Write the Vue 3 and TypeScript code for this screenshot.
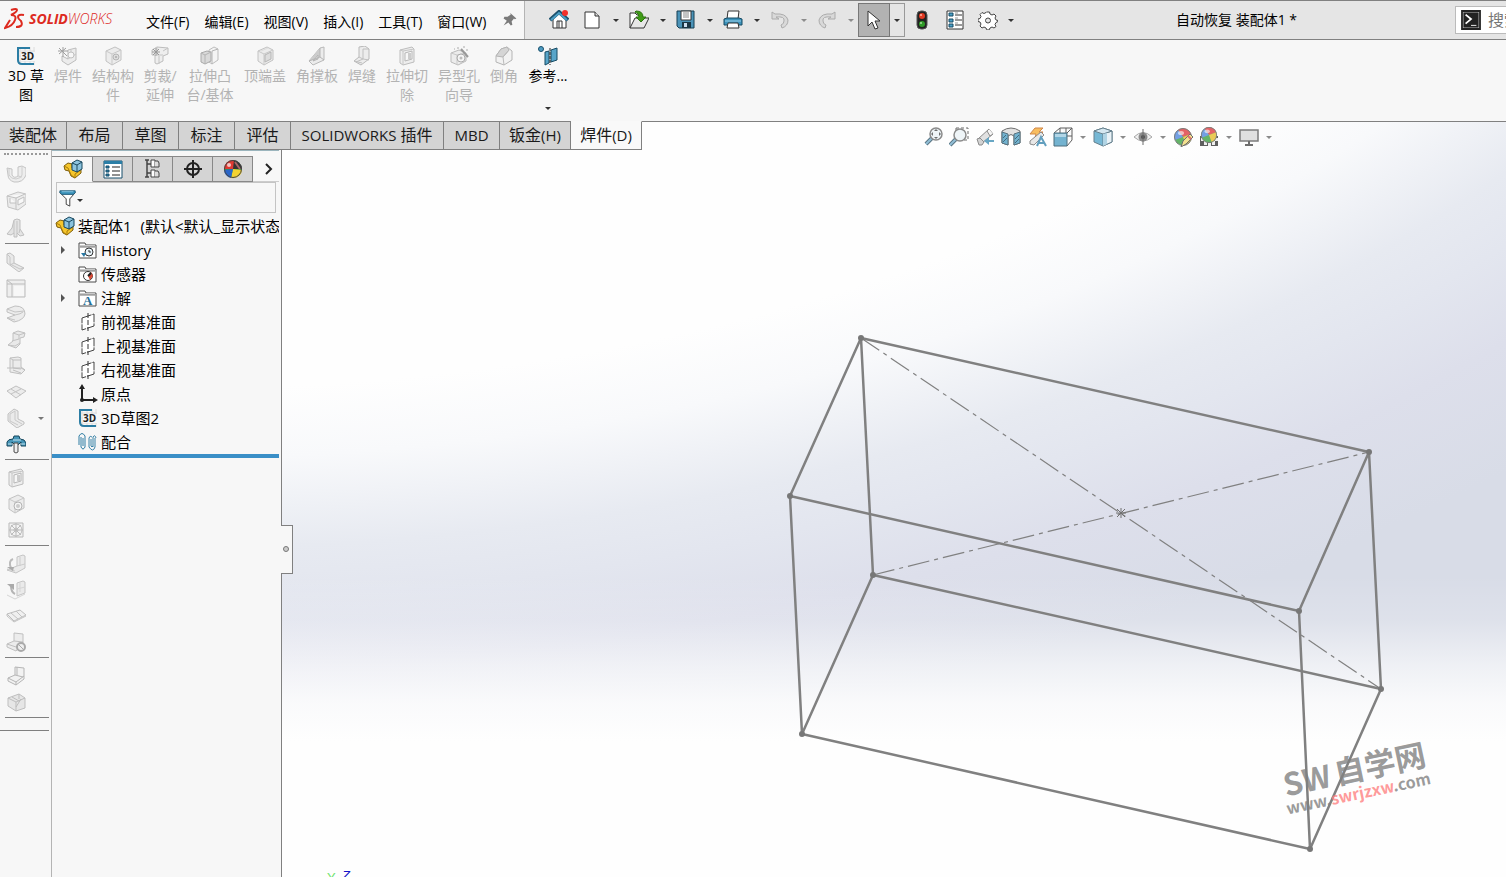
<script setup lang="ts">
interface RibbonItem { icon: string; lines: string[]; width: string; on?: boolean; caret?: boolean }
interface Tab { zh?: string; latin?: string; width: string; on?: boolean; lead?: boolean }
interface TreeNode { icon: string; label: string; arrow?: boolean }
interface QuickItem { icon: string; label: string; caret?: boolean; off?: boolean }

const cube = '<path d="M3 5l9-4 6 3v10l-9 5-6-4z" fill="#ececec" stroke="#c2c2c2"/><path d="M3 5l6 3 9-4M9 8v11" fill="none" stroke="#c9c9c9"/>'
const sketch3d = '<path d="M4 1v18M9 1v18M14 1v18M18 1v18M1 5h18M1 10h18M1 15h18" stroke="#dcdcdc" fill="none"/><path d="M14 2H2v12q0 4 4 4h12" fill="none" stroke="#2b7da4" stroke-width="2"/><rect x="5" y="6" width="14" height="9" fill="#f7f7f7"/><text x="5" y="14" font-family="Open Sans, sans-serif" font-weight="700" font-size="10" fill="#222">3D</text>'
const assembly = '<path d="M1 7l4-3 4 1v4l5 3 4-2v4l-6 5-4-2-2-5-4-1z" fill="#f6c62c" stroke="#7b5c0c"/><path d="M1 7l4 2 3 7 4 3M12 19v-4l6-4" fill="none" stroke="#a97d0b"/><path d="M9 4l5-3 5 2v7l-5 3-5-2z" fill="#8cc3de" stroke="#19485f"/><path d="M9 4l5 2 5-3M14 6v7" fill="none" stroke="#19485f"/>'
const folder = '<path d="M1 18V3h6l1 2h10v13z" fill="#fff" stroke="#4a4a4a"/><path d="M2 5h15v2H2z" fill="#c9c9c9"/><path d="M2 7h15" stroke="#777"/>'
const plane = '<path d="M4 6l12-4v12l-12 4z" fill="#fff" stroke="#444" stroke-dasharray="10 1"/><path d="M10 1v18" stroke="#333" stroke-dasharray="5 2"/>'
const lens = (x: number, y: number) => `<path d="M${x - 4} ${y + 4}l-6 6" stroke="#3f5f70" stroke-width="4"/><path d="M${x - 4} ${y + 4}l-6 6" stroke="#7fb4d0" stroke-width="2"/><circle cx="${x}" cy="${y}" r="6" fill="#edf4f8" stroke="#777" stroke-width="1.500"/>`
const ball = '<circle cx="10" cy="10" r="8.500" fill="#4aa84e"/><path d="M10 10L5 3a8.500 8.500 0 0 1 13 4z" fill="#e0474c"/><path d="M10 10L2 13a8.500 8.500 0 0 1 3-10z" fill="#5b8fe0"/><path d="M10 10l8-3a8.500 8.500 0 0 1-5 11z" fill="#e7c23a"/><circle cx="10" cy="10" r="8.500" fill="none" stroke="#666"/><ellipse cx="8" cy="6" rx="3" ry="2" fill="#fff" opacity=".6"/>'

const icons: Record<string, string> = {
  sketch3d, assembly, plane,
  weldment: '<path d="M4 10l6 3V4l8-2v12l-8 5-6-4z" fill="#ececec" stroke="#bdbdbd"/><path d="M10 13l8-5M13 4v8" fill="none" stroke="#c8c8c8"/><circle cx="13" cy="9" r="3" fill="#f7f7f7" stroke="#c0c0c0"/><path d="M1 2l8 8M1 8l7-6M5 1v10M0 5h10" stroke="#9f9f9f"/>',
  member: cube + '<circle cx="13" cy="11" r="3" fill="#ddd" stroke="#b5b5b5"/><circle cx="13" cy="11" r="1" fill="#aaa"/>',
  trim: '<path d="M2 4l5-3 11 1v6l-5 2v5l-6 3-2-1V9H2z" fill="#eee" stroke="#bdbdbd"/><path d="M7 9h6M7 1v8M13 5l5-3M9 10v8" fill="none" stroke="#c4c4c4"/><path d="M3 3l6 6M9 3L3 9M6 2v8M2 6h8" stroke="#999"/>',
  extrude: '<path d="M9 4l5-3 4 2v11l-6 4-3-2z" fill="#f4f4f4" stroke="#bdbdbd"/><path d="M1 7l6-2 4 1v9l-6 3-4-2z" fill="#d9d9d9" stroke="#a9a9a9"/><path d="M1 7l4 2 6-3M5 9v9M12 5v13M12 5l6-2" fill="none" stroke="#b4b4b4"/>',
  endcap: cube + '<path d="M10 9l6-3v7l-6 3z" fill="#ddd" stroke="#b5b5b5"/><path d="M6 5l7-3" stroke="#ddd"/>',
  gusset: '<path d="M2 15L13 2l4-1v13l-11 5z" fill="#ececec" stroke="#b9b9b9"/><path d="M2 15l11-4V2M13 11l4 3M6 15l5-6v4z" fill="#ccc" stroke="#b5b5b5"/>',
  bead: '<path d="M7 1l6-1 4 3v10l-8 6-7-4 5-4z" fill="#ececec" stroke="#b9b9b9"/><path d="M11 3v10l-7 3M11 13l6 1M2 15l8 2M11 3l6 0M7 11l4 2" fill="none" stroke="#c0c0c0"/>',
  cut: '<path d="M3 4l12-3 2 2v13l-11 3-3-2z" fill="#eee" stroke="#bdbdbd"/><path d="M3 4l3 1 11-2M6 5v14" fill="none" stroke="#c6c6c6"/><path d="M8 7l7-2v8l-7 2z" fill="#f7f7f7" stroke="#b7b7b7"/><path d="M11 7h3v6h-3z" fill="#ccc"/>',
  hole: cube + '<circle cx="12" cy="12" r="4" fill="#f5f5f5" stroke="#b3b3b3"/><circle cx="12" cy="12" r="2" fill="#ccc"/>',
  wizard: '<path d="M2 7l8-3 7 3v8l-8 4-7-3z" fill="#ececec" stroke="#bbb"/><path d="M2 7l6 2 9-2M8 9v10" fill="none" stroke="#c9c9c9"/><circle cx="12" cy="12" r="4" fill="#f5f5f5" stroke="#aaa"/><circle cx="12" cy="12" r="1.500" fill="#bbb"/><path d="M12 3l7 8" stroke="#999" stroke-width="2"/><path d="M8 2h2M14 1h2M17 4h2M5 3h1" stroke="#aaa"/>',
  chamfer: '<path d="M2 10l5-7 6-2 5 4v9l-8 5-8-3z" fill="#f2f2f2" stroke="#b5b5b5"/><path d="M2 10l7 1 6-7-2-3-6 2z" fill="#d5d5d5" stroke="#b5b5b5"/><path d="M9 11l1 8M9 11l6-7" stroke="#bbb"/>',
  reference: '<circle cx="3" cy="3" r="2.500" fill="#4f9cc2" stroke="#19506c"/><path d="M7 6l4-1v12l-4 2zM13 4l6-2v12l-6 2z" fill="#58a5c9" stroke="#174a63"/><path d="M12 2v17" stroke="#222" stroke-dasharray="3 1"/>',
  tube: '<path d="M1 4l5 1v6q2 4 6 1V3l4-1 4 2v7q-3 8-12 7-6-2-6-7z" fill="#ededed" stroke="#c4c4c4"/><path d="M3 5v6q2 4 7 4 6-1 6-4V3M12 12l4 1" fill="none" stroke="#cecece"/>',
  frame: '<path d="M1 5l11-4 8 2v10l-8 6-10-3z" fill="#ececec" stroke="#c3c3c3"/><path d="M1 5l9 2 9-4M10 7v11M4 7v5h6M12 9l6-3v5l-6 3z" fill="#f8f8f8" stroke="#c0c0c0"/>',
  loft: '<path d="M8 2l3-1 3 1v9l4 6-4 1-3-3v4H8v-4l-3 2-4-1 5-6z" fill="#e4e4e4" stroke="#bfbfbf"/><path d="M8 3v12M11 3v12M14 11l-1 4" stroke="#c3c3c3" fill="none"/>',
  angle: '<path d="M1 2l3-1 4 3v7l10 5-5 4L1 11z" fill="#e9e9e9" stroke="#c0c0c0"/><path d="M4 5v7l10 5 4-1M1 2l3 3M8 11l-4 2" fill="none" stroke="#c6c6c6"/>',
  corner: '<path d="M1 2h18v17H1z" fill="#eee" stroke="#bcbcbc"/><path d="M1 6h18M6 6v13M1 2l5 4" fill="none" stroke="#bcbcbc"/><path d="M8 8h10v10H8z" fill="#f7f7f7"/>',
  bend: '<path d="M1 5l8-3q10 0 10 8-1 6-11 8l-7-4 8-3-8-3z" fill="#ececec" stroke="#c0c0c0"/><path d="M1 5l8 3 9-1M9 11q6-1 8-3M1 14l8 2" fill="none" stroke="#c4c4c4"/>',
  jog: '<path d="M7 3l5-2 7 2-1 4-4 1v6l-4 4-8-3 5-4z" fill="#e9e9e9" stroke="#c0c0c0"/><path d="M7 3l6 2 6-2M13 5v4l-7 2M2 15l7 1 5-3" fill="none" stroke="#c3c3c3"/>',
  flange: '<path d="M4 2l8-1 3 1v9l4 3-4 4-11-2V9z" fill="#ececec" stroke="#c0c0c0"/><path d="M4 2l3 2h8M7 4v8l8 1M1 12h14l4 2M7 14l8 3" fill="none" stroke="#bfbfbf"/>',
  cross: '<path d="M1 9l9-5 10 5-10 7z" fill="#ececec" stroke="#c0c0c0"/><path d="M5 7l10 6M15 7l-10 5" fill="none" stroke="#c3c3c3"/>',
  weldcorner: '<path d="M2 6l6-5 4 2v8l6 3v2l-7 4-9-7z" fill="#ebebeb" stroke="#c0c0c0"/><path d="M4 6l5-3v9l7 4M4 6v7l8 4" fill="none" stroke="#c9c9c9"/>',
  canopy: '<path d="M1 12V8q1-3 6-3l1-3h5l1 3q5 0 6 4v3h-5V8l-3 3H9L6 8v4z" fill="#4796b8" stroke="#17475d"/><path d="M2 10h4M15 10h4M7 6h8" stroke="#bfe0ee"/><path d="M8 9h4v9q-2 2-4 0z" fill="#ddd" stroke="#555"/><path d="M10 10v8" stroke="#fff"/>',
  vent: '<path d="M3 3h14v14H3z" fill="#f2f2f2" stroke="#b9b9b9"/><circle cx="10" cy="10" r="6" fill="none" stroke="#bbb"/><path d="M10 3v14M3 10h14M5 5l10 10M15 5L5 15" stroke="#bbb"/><circle cx="10" cy="10" r="2" fill="none" stroke="#bbb"/>',
  unfold: '<path d="M11 3l6-2 2 1v12l-9 5-9-3 10-4z" fill="#eaeaea" stroke="#c5c5c5"/><path d="M11 12l8-2M14 3v9M1 15l8 2" stroke="#ccc" fill="none"/><path d="M7 5q-5 2-2 9" fill="none" stroke="#bbb" stroke-width="2"/><path d="M1 13h7l-1 4z" fill="#aaa"/>',
  fold: '<path d="M11 3l6-2 2 1v11l-8 3V4z" fill="#eaeaea" stroke="#c5c5c5"/><path d="M1 15l8 4 10-5M14 3v9M11 9l8-2" stroke="#d5d5d5" fill="none"/><path d="M5 6q0 6 4 8" fill="none" stroke="#b5b5b5" stroke-width="2"/><path d="M1 4h7v6z" fill="#aaa"/>',
  flat: '<path d="M1 8l13-4 6 5-12 6z" fill="#f0f0f0" stroke="#bdbdbd"/><path d="M5 7l7 6M10 5l6 6M1 8v2l7 6 12-6" fill="none" stroke="#c2c2c2"/>',
  nobend: '<path d="M8 1l9 1v9l-7 8-9-4v-3l7-3z" fill="#ececec" stroke="#c0c0c0"/><path d="M1 12l9 3 7-5M8 9l9 1" fill="none" stroke="#c0c0c0"/><circle cx="15" cy="15" r="4" fill="#eee" stroke="#aaa" stroke-width="2"/><path d="M12 12l6 6" stroke="#aaa"/>',
  rip: '<path d="M9 1l9 1v11l-8 6-8-4v-3l7-3z" fill="#f2f2f2" stroke="#b5b5b5"/><path d="M9 9l8 2M2 12l8 4 8-6M11 1v8M10 16v3" fill="none" stroke="#b5b5b5"/>',
  solidify: '<path d="M2 6l11-4 6 4v10l-9 3-8-5z" fill="#e6e6e6" stroke="#bfbfbf"/><path d="M2 6l8 4 9-4M10 10v9M6 5l7 4M13 2v5M10 15l5-8" fill="none" stroke="#bdbdbd"/>',
  history: folder + '<circle cx="11" cy="12" r="4" fill="#e8f4fa" stroke="#333"/><path d="M11 10v2h2" fill="none" stroke="#333"/><path d="M3 13h5l-2 4z" fill="#2879a5"/>',
  sensor: folder + '<circle cx="10" cy="12" r="4.500" fill="#fff" stroke="#333"/><path d="M10 12l3-4 2 4-3 4z" fill="#da4a36"/><path d="M10 12l3-3" stroke="#222" stroke-width="2"/>',
  note: folder + '<text x="5" y="17" font-family="Liberation Serif, serif" font-weight="700" font-size="13" fill="#266f98">A</text>',
  origin: '<path d="M4 16V4M4 16h12" fill="none" stroke="#222" stroke-width="2"/><path d="M4 0l3 5H1zM20 16l-5-3v6z" fill="#222"/><circle cx="4" cy="16" r="2" fill="#222"/>',
  mate: '<path d="M3 5v10q2 4 4 0V4q-3-5-6 0v9M5 6v8" fill="none" stroke="#2f7da3"/><path d="M11 6v9M17 6v9q-2 6-6 0M15 5v10M13 7v7q1 2 2 0M11 6q1-3 3-1M15 5q2-3 3 1" fill="none" stroke="#3b84a8"/>',
  list: '<path d="M1 2h18v17H1z" fill="#fff" stroke="#174f6c"/><path d="M1 2h18v3H1z" fill="#2c7fa7"/><path d="M3 7h3v2H3zM3 11h3v2H3zM3 15h3v2H3z" fill="#2c7fa7" stroke="#174f6c"/><path d="M9 8h8M9 12h8M9 16h8" stroke="#222"/>',
  config: '<path d="M4 1v17M4 5h4M4 14h4M2 1h4M2 18h4" fill="none" stroke="#444" stroke-width="1.500"/><path d="M8 1h4v7H8zM8 11h4v7H8z" fill="#fff" stroke="#444"/><path d="M12 2q4-1 4 2v4h-4M12 12q4-1 4 2v4h-4" fill="#ddd" stroke="#444"/>',
  target: '<circle cx="10" cy="10" r="6" fill="none" stroke="#222" stroke-width="2"/><path d="M10 1v18M1 10h18" stroke="#222" stroke-width="2"/>',
  colors: '<circle cx="10" cy="10" r="8.500" fill="#2fa342"/><path d="M10 10V1a9 9 0 0 1 9 9z" fill="#333"/><path d="M10 10H1a9 9 0 0 1 10-9z" fill="#e03a32"/><path d="M10 10l9 1a9 9 0 0 1-11 8z" fill="#f3d22f"/><path d="M10 10l-2 9a9 9 0 0 1-7-8z" fill="#2a65c8"/><circle cx="10" cy="10" r="8.500" fill="none" stroke="#444"/><path d="M12 3l5 7" stroke="#a66" stroke-width="2"/><ellipse cx="6" cy="6" rx="2" ry="2" fill="#fff" opacity=".7"/>',
  filter: '<path d="M1 4l7 7v6l4 2v-8l6-7z" fill="#fff" stroke="#333"/><path d="M1 2h17v2l-2 2H3L1 4z" fill="#3a93bb" stroke="#1f5a78"/><path d="M3 3h13" stroke="#8cc6e0"/>',
  home: '<path d="M4 9v9h13V9l-7-6z" fill="#fff" stroke="#333"/><path d="M8 18v-7h5v7M10 11v7" fill="none" stroke="#333"/><path d="M1 10l9-8 9 8" fill="none" stroke="#1d526e" stroke-width="4"/><path d="M2 10l8-7 8 7" fill="none" stroke="#4c9fc5" stroke-width="2"/><circle cx="16" cy="3" r="3" fill="#f2302b"/>',
  newdoc: '<path d="M3 2h10l4 4v12H3z" fill="#fff" stroke="#333"/><path d="M13 2v4h4" fill="#ddd" stroke="#333"/>',
  open: '<path d="M1 18V3h5l2 2h5v3" fill="#fff" stroke="#333"/><path d="M1 18L6 8h14l-5 10z" fill="#e7e7e7" stroke="#333"/><path d="M7 1q7 0 7 6h3l-5 5-5-5h3q0-4-4-5z" fill="#3f9b16" stroke="#2c7410"/>',
  save: '<path d="M1 1h17v17H3l-2-2z" fill="#4a93b8" stroke="#173e52"/><path d="M5 1h10v9H5z" fill="#fff" stroke="#333"/><path d="M7 3h6M7 5h6M7 7h6" stroke="#888"/><path d="M6 12h9v6H6z" fill="#1b3645"/><path d="M8 13h3v4H8z" fill="#cde"/>',
  print: '<path d="M5 1h11l-1 8H4z" fill="#fff" stroke="#333"/><path d="M1 9l3-1h12l3 1v6H1z" fill="#3d93bb" stroke="#174a63"/><path d="M2 11h16" stroke="#9bd0e8"/><path d="M5 13h10l1 5H4z" fill="#fff" stroke="#333"/>',
  undo: '<path d="M2 2v7h7L6 7q9-1 8 4 0 3-3 4l1 3q6-2 6-8Q16 3 5 4z" fill="#d9d9d9" stroke="#ababab"/>',
  redo: '<path d="M18 2v7h-7l3-2q-9-1-8 4 0 3 3 4l-1 3q-6-2-6-8Q4 3 15 4z" fill="#d9d9d9" stroke="#ababab"/>',
  pointer: '<path d="M4 1v15l4-4 3 7 3-1-3-7h5z" fill="#fff" stroke="#333"/>',
  traffic: '<rect x="5" y="1" width="10" height="18" rx="4" fill="#222" stroke="#555"/><circle cx="10" cy="6" r="3" fill="#e23a23"/><circle cx="10" cy="14" r="3" fill="#2f9a27"/><circle cx="9" cy="5" r="1" fill="#ffb9a8"/><circle cx="9" cy="13" r="1" fill="#a9e0a0"/>',
  options: '<path d="M2 1h16v18H2z" fill="#fff" stroke="#333"/><path d="M4 3h4v3H4zM4 9h4v3H4zM4 14h4v3H4z" fill="#4ba0c8" stroke="#174a63"/><path d="M10 5h7M10 10h7M10 15h7" stroke="#333"/><path d="M10 3h3M10 8h3M10 13h3" stroke="#999"/>',
  gear: '<path d="M8.500 2h3l.5 2 2 1 2-1 2 2-1 2 1 2 2 .5v1l-2 1-1 2 1 2-2 1.500-2-1-2 1-1 2h-2l-1-2-2-1-2 1-2-2 1-2-1-2-2-.5v-2.500l2-.5 1-2-1-2 2-2 2 1 2-1z" fill="#fff" stroke="#444"/><circle cx="10" cy="10.500" r="2.500" fill="#e7e7e7" stroke="#444"/>',
  pin: '<path d="M11 2l7 6-2 1-1-1-3 4 1 4-2 1-3-4-6 4 4-6-4-3 1-2h4l4-3-1-1z" fill="#7b7b7b"/>',
  prompt: '<path d="M1 1h18v18H1z" fill="#222" stroke="#eee"/><path d="M0 0h20v20H0z" fill="none" stroke="#222" stroke-width="2"/><path d="M4 4l6 5-6 5" fill="none" stroke="#fff" stroke-width="2"/><path d="M10 16h6" stroke="#fff"/>',
  zoomfit: lens(13, 7) + '<path d="M13 2l2 2h-4zM13 12l2-2h-4zM8 7l2-2v4zM18 7l-2-2v4z" fill="#555"/>',
  zoomarea: '<path d="M7 1h12v12H7z" fill="none" stroke="#555" stroke-dasharray="3 2"/>' + lens(11, 8),
  prev: '<path d="M3 12L14 2l4 5-11 9z" fill="#ddd" stroke="#777"/><path d="M2 12l3-1 4 4-2 3H4z" fill="#ccc" stroke="#777"/><path d="M14 2l-2 2 3 5 3-2" fill="#f4f4f4" stroke="#777"/><path d="M19 15h-5v3l-5-4 5-4v3h5z" fill="#4f98bb"/>',
  section: '<path d="M1 4q9-6 18 0v12l-6 2V9q-3-3-6 0v9l-6-2z" fill="#ddd" stroke="#555"/><path d="M1 5l6 2v11l-6-2zM13 7l6-2v11l-6 2z" fill="#5aa6c9" stroke="#3b5a69"/><path d="M2 11l3-3M2 15l4-4M14 12l4-4M14 16l4-4" stroke="#24536a"/>',
  dynamic: '<path d="M8 1h8l-4 4h4l-8 6 1-4H3z" fill="#f7b244" stroke="#c8722a"/><path d="M3 14L14 5l3 3L7 18l-4-1z" fill="#e5e5e5" stroke="#777"/><path d="M10 19l4-9 5 9M12 16h5" fill="none" stroke="#478fb4" stroke-width="2"/>',
  orient: '<path d="M7 1h12v12M7 1v5M1 6l6-5M14 6l5-5M14 19l5-6M13 1v8h6" fill="#f7f7f7" stroke="#444"/><path d="M1 6h13v13H1z" fill="#5da7c9" stroke="#2f5567"/><path d="M2 7h11v3H2z" fill="#a5d0e3"/>',
  display: '<path d="M1 4l9-3 9 3v11l-9 4-9-4z" fill="#5faccf" stroke="#4c6b7a"/><path d="M10 7l9-3v11l-9 4z" fill="#e6f1f6" stroke="#4c6b7a"/><path d="M1 4l9 3 9-3-9-3z" fill="#cfe4ee" stroke="#4c6b7a"/><path d="M10 7l4-1v11l-4 2z" fill="#a4cde0"/>',
  eye: '<path d="M1 10q9-9 18 0-9 8-18 0z" fill="#eee" stroke="#999"/><circle cx="10" cy="10" r="4.500" fill="#777"/><circle cx="10" cy="10" r="2" fill="#333"/><path d="M10 2v16" stroke="#555"/>',
  appearance: ball + '<path d="M10 14l7-7 3 3-7 7-5 3z" fill="#f3dd7c" stroke="#555"/><path d="M15 9l3 3" stroke="#d55" stroke-width="2"/>',
  scene: '<path d="M1 9h18v10H1z" fill="#444"/><path d="M2 11h3v3H2zM5 14h3v4H5zM9 16h3v3H9zM13 14h3v4h-3zM16 11h3v3h-3z" fill="#eee"/><g transform="translate(1 -1) scale(.9)">' + ball + '</g>',
  monitor: '<path d="M1 3h18v11H1z" fill="#dcdcdc" stroke="#666" stroke-width="1.500"/><path d="M10 14v4M6 18h8" stroke="#555" stroke-width="2"/>',
}

const menus = ['文件(F)', '编辑(E)', '视图(V)', '插入(I)', '工具(T)', '窗口(W)']

const quick: QuickItem[] = [
  { icon: 'newdoc', label: '新建', caret: true },
  { icon: 'open', label: '打开', caret: true },
  { icon: 'save', label: '保存', caret: true },
  { icon: 'print', label: '打印', caret: true },
  { icon: 'undo', label: '撤销', caret: true, off: true },
  { icon: 'redo', label: '重做', caret: true, off: true },
]

const ribbon: RibbonItem[] = [
  { icon: 'sketch3d', lines: ['3D 草', '图'], width: 'w40', on: true },
  { icon: 'weldment', lines: ['焊件'], width: 'w44' },
  { icon: 'member', lines: ['结构构', '件'], width: 'w46' },
  { icon: 'trim', lines: ['剪裁/', '延伸'], width: 'w48' },
  { icon: 'extrude', lines: ['拉伸凸', '台/基体'], width: 'w52' },
  { icon: 'endcap', lines: ['顶端盖'], width: 'w58' },
  { icon: 'gusset', lines: ['角撑板'], width: 'w46' },
  { icon: 'bead', lines: ['焊缝'], width: 'w44' },
  { icon: 'cut', lines: ['拉伸切', '除'], width: 'w46' },
  { icon: 'wizard', lines: ['异型孔', '向导'], width: 'w58' },
  { icon: 'chamfer', lines: ['倒角'], width: 'w32' },
  { icon: 'reference', lines: ['参考...'], width: 'w56', on: true, caret: true },
]

const tabs: Tab[] = [
  { zh: '装配体', width: 't67' },
  { zh: '布局', width: 't56' },
  { zh: '草图', width: 't56' },
  { zh: '标注', width: 't56' },
  { zh: '评估', width: 't56' },
  { latin: 'SOLIDWORKS ', zh: '插件', width: 't153', lead: true },
  { latin: 'MBD', width: 't56' },
  { zh: '钣金', latin: '(H)', width: 't71' },
  { zh: '焊件', latin: '(D)', width: 't71', on: true },
]

const viewTools: (string | null)[] = ['zoomfit', 'zoomarea', 'prev', 'section', 'dynamic', 'orient', null, 'display', null, 'eye', null, 'appearance', 'scene', null, 'monitor', null]

const sideGroups: string[][] = [
  ['tube', 'frame', 'loft'],
  ['angle', 'corner', 'bend', 'jog', 'flange', 'cross', 'weldcorner', 'canopy'],
  ['cut', 'hole', 'vent'],
  ['unfold', 'fold', 'flat', 'nobend'],
  ['rip', 'solidify'],
]

const managerTabs = [
  { icon: 'assembly', label: '设计树' },
  { icon: 'list', label: '属性' },
  { icon: 'config', label: '配置' },
  { icon: 'target', label: '尺寸' },
  { icon: 'colors', label: '外观' },
]

const nodes: TreeNode[] = [
  { icon: 'history', label: 'History', arrow: true },
  { icon: 'sensor', label: '传感器' },
  { icon: 'note', label: '注解', arrow: true },
  { icon: 'plane', label: '前视基准面' },
  { icon: 'plane', label: '上视基准面' },
  { icon: 'plane', label: '右视基准面' },
  { icon: 'origin', label: '原点' },
  { icon: 'sketch3d', label: '3D草图2' },
  { icon: 'mate', label: '配合' },
]

const corners: [number, number][] = [
  [861, 338], [1369, 452], [1299, 611], [790, 496],
  [873, 575], [1381, 689], [1310, 849], [802, 734],
]
const edges: [number, number][] = [
  [0, 1], [1, 2], [2, 3], [3, 0], [4, 5], [5, 6], [6, 7], [7, 4], [0, 4], [1, 5], [2, 6], [3, 7],
]
const diagonals: [number, number][] = [[0, 5], [4, 1]]
</script>

<template>
  <div class="app">
    <header class="titlebar">
      <div class="menu-part">
        <div class="logo">
          <svg class="mark" viewBox="0 0 22 22" aria-hidden="true">
            <path d="M7 2q6-2 6 0 0 2-6 5 6 0 4 5-2 6-10 8l5-8" fill="none" stroke="#dd2a1f" stroke-width="2" />
            <path d="M20 7q-6-1-6 2 0 2 3 4 3 6-5 6" fill="none" stroke="#dd2a1f" stroke-width="2" />
          </svg>
          <span class="brand"><b>SOLID</b>WORKS</span>
        </div>
        <nav class="menus">
          <button v-for="m in menus" :key="m" type="button">{{ m }}</button>
        </nav>
        <button type="button" class="pin" aria-label="固定菜单">
          <svg class="i16" viewBox="0 0 20 20" v-html="icons.pin" />
        </button>
      </div>
      <div class="quick">
        <button type="button" class="q home" aria-label="主页"><svg class="i20" viewBox="0 0 20 20" v-html="icons.home" /></button>
        <template v-for="q in quick" :key="q.icon">
          <button type="button" class="q" :aria-label="q.label"><svg class="i20" viewBox="0 0 20 20" v-html="icons[q.icon]" /></button>
          <button type="button" class="drop" :class="{ off: q.off }" :aria-label="q.label + '选项'"><i class="caret" /></button>
        </template>
        <button type="button" class="select" aria-label="选择"><svg class="i20" viewBox="0 0 20 20" v-html="icons.pointer" /></button>
        <button type="button" class="select-drop" aria-label="选择选项"><i class="caret" /></button>
        <button type="button" class="q wide" aria-label="重建"><svg class="i20" viewBox="0 0 20 20" v-html="icons.traffic" /></button>
        <button type="button" class="q wide" aria-label="文件属性"><svg class="i20" viewBox="0 0 20 20" v-html="icons.options" /></button>
        <button type="button" class="q wide" aria-label="选项"><svg class="i20" viewBox="0 0 20 20" v-html="icons.gear" /></button>
        <button type="button" class="drop thin" aria-label="更多选项"><i class="caret" /></button>
      </div>
      <div class="doc-title">自动恢复 装配体1 *</div>
      <label class="search">
        <svg class="i18" viewBox="0 0 20 20" v-html="icons.prompt" />
        <input type="text" aria-label="搜索命令" placeholder="搜索命令">
      </label>
    </header>

    <section class="ribbon">
      <button v-for="r in ribbon" :key="r.icon" type="button" class="cmd" :class="[r.width, { on: r.on }]">
        <svg class="i20" viewBox="0 0 20 20" v-html="icons[r.icon]" />
        <span v-for="l in r.lines" :key="l">{{ l }}</span>
        <i v-if="r.caret" class="caret" />
      </button>
    </section>

    <main class="work">
      <div class="canvas">
        <svg class="scene" viewBox="0 122 1506 755" preserveAspectRatio="xMidYMid meet" role="img" aria-label="3D 草图">
          <g stroke="#808080" stroke-width="2.500" stroke-linecap="round">
            <line v-for="(e, i) in edges" :key="i" :x1="corners[e[0]][0]" :y1="corners[e[0]][1]" :x2="corners[e[1]][0]" :y2="corners[e[1]][1]" />
          </g>
          <g stroke="#808080" stroke-width="1.200" stroke-dasharray="22 5 4 5">
            <line v-for="(d, i) in diagonals" :key="i" :x1="corners[d[0]][0]" :y1="corners[d[0]][1]" :x2="corners[d[1]][0]" :y2="corners[d[1]][1]" />
          </g>
          <circle v-for="(c, i) in corners" :key="i" :cx="c[0]" :cy="c[1]" r="3" fill="#777" />
          <path d="M1116 513h10M1121 508v10M1117 509l8 8M1125 509l-8 8" stroke="#707070" fill="none" />
          <g class="mark-text" transform="translate(1288 796) rotate(-12)">
            <text x="-2" y="0" class="wm-big">SW</text>
            <text x="50" y="-1" class="wm-big">自学网</text>
            <text x="-4" y="18" class="wm-small">www.<tspan class="wm-red">swrjzxw</tspan>.com</text>
          </g>
          <text x="327" y="882" class="axis" fill="#6fe36f">Y</text>
          <text x="342" y="880" class="axis slant" fill="#1414c8">Z</text>
        </svg>
      </div>

      <div class="tab-row">
        <div class="tabs" role="tablist">
          <button v-for="(t, i) in tabs" :key="i" type="button" role="tab" :aria-selected="!!t.on" class="tab" :class="[t.width, { on: t.on }]">
            <template v-if="t.lead"><span class="latin">{{ t.latin }}</span>{{ t.zh }}</template>
            <template v-else>{{ t.zh }}<span v-if="t.latin" class="latin">{{ t.latin }}</span></template>
          </button>
        </div>
        <div class="view-tools">
          <template v-for="(v, i) in viewTools" :key="i">
            <button v-if="v" type="button" class="vt" :aria-label="v"><svg class="i20" viewBox="0 0 20 20" v-html="icons[v]" /></button>
            <button v-else type="button" class="vt-drop" aria-label="下拉"><i class="caret pale" /></button>
          </template>
        </div>
      </div>

      <aside class="side">
        <div class="grip" />
        <div v-for="(g, gi) in sideGroups" :key="gi" class="side-group" :class="{ roomy: gi === 0 }">
          <button v-for="s in g" :key="s" type="button" class="tool" :aria-label="s">
            <svg class="i20" viewBox="0 0 20 20" v-html="icons[s]" />
            <i v-if="s === 'weldcorner'" class="caret pale" />
          </button>
        </div>
        <div class="side-end" />
      </aside>

      <section class="manager">
        <div class="manager-tabs" role="tablist">
          <button v-for="(m, i) in managerTabs" :key="m.icon" type="button" role="tab" :aria-selected="i === 0" :aria-label="m.label" class="mtab" :class="{ on: i === 0 }">
            <svg class="i20" viewBox="0 0 20 20" v-html="icons[m.icon]" />
          </button>
          <button type="button" class="more" aria-label="更多">
            <svg viewBox="0 0 10 14"><path d="M2 2l5 5-5 5" fill="none" stroke="#222" stroke-width="2" /></svg>
          </button>
        </div>
        <label class="filter">
          <svg class="i18" viewBox="0 0 20 20" v-html="icons.filter" />
          <i class="caret" />
          <input type="text" aria-label="筛选">
        </label>
        <ul class="tree">
          <li class="root"><svg class="i20" viewBox="0 0 20 20" v-html="icons.assembly" /><span class="root-name">装配体1</span><span>(默认&lt;默认_显示状态-1&gt;)</span></li>
          <li v-for="n in nodes" :key="n.label" class="node">
            <i class="twist" :class="{ shown: n.arrow }" />
            <svg class="i20" viewBox="0 0 20 20" v-html="icons[n.icon]" />
            <span>{{ n.label }}</span>
          </li>
        </ul>
        <div class="rollback" />
        <button type="button" class="handle" aria-label="折叠面板"><i /></button>
      </section>
    </main>
  </div>
</template>

<style>
html, body, #app { height: 100%; margin: 0; }
body { overflow: hidden; }
</style>

<style scoped>
.app {
  display: flex;
  flex-direction: column;
  height: 100%;
  min-width: 1100px;
  overflow: hidden;
  background: #f7f7f7;
  color: #000;
  font-family: "Open Sans", "Noto Sans CJK SC", sans-serif;
  font-size: 14px;
  line-height: 20px;
}
button {
  display: flex;
  align-items: center;
  justify-content: center;
  flex: none;
  box-sizing: border-box;
  margin: 0;
  padding: 0;
  border: 0;
  background: none;
  color: inherit;
  font: inherit;
  white-space: nowrap;
}
input { border: 0; outline: 0; background: none; font: inherit; min-width: 0; padding: 0; }
svg { display: block; flex: none; }
.i16 { width: 16px; height: 16px; }
.i18 { width: 18px; height: 18px; overflow: visible; }
.i20 { width: 20px; height: 20px; }
.caret {
  flex: none;
  width: 0;
  height: 0;
  border: 3px solid transparent;
  border-top-color: #333;
  border-bottom: 0;
}

.titlebar {
  display: flex;
  flex: none;
  align-items: stretch;
  box-sizing: border-box;
  height: 40px;
  border-top: 1px solid #808080;
  border-bottom: 1px solid #808080;
  background: #e5e5e5;
}
.menu-part {
  display: flex;
  align-items: center;
  flex: none;
  box-sizing: border-box;
  width: 525px;
  padding-left: 4px;
  border-right: 1px solid #b4b4b4;
  background: #f7f7f7;
}
.logo { display: flex; align-items: center; width: 142px; gap: 3px; padding-bottom: 2px; box-sizing: border-box; }
.mark { width: 22px; height: 22px; }
.brand { color: #dd2a1f; font-size: 14px; font-style: italic; font-weight: 300; }
.brand b { font-weight: 700; }
.menus { display: flex; gap: 15px; padding-top: 3px; }
.pin { margin-left: 16px; }
.quick { display: flex; align-items: center; flex: none; padding-left: 20px; }
.q { width: 28px; height: 30px; }
.q.home { margin-right: 5px; }
.q.wide { width: 33px; }
.drop { width: 19px; height: 30px; }
.drop.thin { width: 14px; }
.drop.off { opacity: .5; }
.select { width: 32px; height: 34px; margin-left: -2px; border: 1px solid #777; background: #b2b2b2; }
.select-drop { width: 15px; height: 34px; border: 1px solid #999; border-left: 0; }
.doc-title { flex: 1; display: flex; align-items: center; justify-content: center; }
.search {
  display: flex;
  align-items: center;
  gap: 8px;
  flex: none;
  box-sizing: border-box;
  width: 51px;
  height: 28px;
  margin-top: 5px;
  padding-left: 6px;
  overflow: hidden;
  border: 1px solid #bbb;
  border-right: 0;
  background: #fff;
}
.search input { flex: none; width: 80px; font-size: 16px; color: #777; }
.search input::placeholder { color: #777; opacity: 1; }

.ribbon {
  display: flex;
  align-items: flex-start;
  flex: none;
  box-sizing: border-box;
  height: 81px;
  padding: 6px 6px 0;
}
.cmd { flex-direction: column; justify-content: flex-start; color: #b3b3b3; line-height: 19px; height: 72px; }
.cmd.on { color: #000; }
.cmd .caret { margin: auto 0 8px; }
.w32 { width: 32px; }
.w40 { width: 40px; }
.w44 { width: 44px; }
.w46 { width: 46px; }
.w48 { width: 48px; }
.w52 { width: 52px; }
.w56 { width: 56px; }
.w58 { width: 58px; }

.work {
  display: grid;
  flex: 1;
  min-height: 0;
  grid-template: 29px minmax(0, 1fr) / 52px 230px minmax(0, 1fr);
}
.canvas {
  grid-area: 1 / 1 / 3 / 4;
  border-top: 1px solid #808080;
  min-height: 0;
  background:
    linear-gradient(rgba(254, 254, 254, 0) 60%, rgba(254, 254, 254, .16) 66%, rgba(254, 254, 254, .6) 72%, rgba(254, 254, 254, .88) 77%, #fefefe 82%),
    radial-gradient(ellipse 105% 132% at 11% -94%, #fefefe 98%, #f8f9fb 105%, #e7eaf1 114%, #e3e6ef 119%, #dddfeb 126%, #d8dce7 136%);
}
.scene { width: 100%; height: 100%; }
.mark-text { font-family: "Noto Sans CJK SC", sans-serif; fill: #808080; fill-opacity: .8; font-weight: 700; }
.wm-big { font-size: 31px; }
.wm-small { font-size: 16px; }
.wm-red { fill: #ff8080; }
.axis { font: 13px "Liberation Sans", sans-serif; }
.slant { font-style: italic; }

.tab-row { grid-area: 1 / 1 / 2 / 4; display: flex; align-items: stretch; min-width: 0; }
.tabs { display: flex; }
.tab {
  padding-bottom: 2px;
  border: 1px solid #808080;
  border-left: 0;
  background: #d4d4d4;
  color: #1a1a1a;
  font-size: 16px;
  line-height: 24px;
  white-space: pre;
}
.tab.on { background: #f9f9f9; border-top-color: #f9f9f9; }
.latin { font-size: 15px; }
.t56 { width: 56px; }
.t67 { width: 67px; }
.t71 { width: 71px; }
.t153 { width: 153px; }
.view-tools { display: flex; align-items: center; margin-left: auto; margin-right: 230px; padding-top: 3px; opacity: .85; }
.vt { width: 26px; height: 24px; }
.vt-drop { width: 14px; height: 24px; }

.side {
  grid-area: 2 / 1 / 3 / 2;
  overflow: hidden;
  border-right: 1px solid #b4b4b4;
  background: #f7f7f7;
}
.grip { margin: 3px 3px 5px 4px; border-top: 2px dotted #999; }
.side-group { margin-left: 5px; padding-bottom: 5px; }
.side-group::after { content: ""; display: block; width: 44px; height: 1px; margin-top: 2px; background: #808080; }
.tool { width: 42px; height: 26px; justify-content: flex-start; padding-left: 1px; }
.roomy .tool { height: 27px; }
.tool .caret { margin-left: 12px; }
.caret.pale { border-top-color: #777; }
.side-end { width: 49px; height: 1px; margin-top: 7px; background: #808080; }

.manager {
  grid-area: 2 / 2 / 3 / 3;
  position: relative;
  border-right: 1px solid #808080;
  background: #f7f7f7;
  min-width: 0;
}
.manager-tabs { display: flex; margin-right: 2px; padding-top: 5px; border-top: 1px solid #9bb5bd; }
.mtab { width: 40px; height: 26px; border: 1px solid #888; border-left: 0; background: #d4d4d4; }
.mtab.on { width: 41px; padding-left: 2px; background: #f7f7f7; border-bottom-color: #f7f7f7; }
.more { flex: 1; padding-left: 5px; border-bottom: 1px solid #ccc; }
.more svg { width: 10px; height: 14px; }
.filter {
  display: flex;
  align-items: center;
  box-sizing: border-box;
  height: 31px;
  margin: 0 5px 0 4px;
  padding-left: 2px;
  border: 1px solid #c4c4c4;
}
.filter .caret { margin-top: 6px; }
.filter input { flex: 1; }
.tree { list-style: none; margin: 0 2px 0 0; padding: 0; overflow: hidden; font-size: 15px; line-height: 24px; white-space: nowrap; }
.root { display: flex; align-items: center; padding-left: 3px; height: 25px; }
.root .i20 { margin-right: 3px; }
.root-name { margin-right: 9px; }
.node { display: flex; align-items: center; height: 24px; padding-left: 9px; }
.node .i20 { margin-right: 3px; }
.twist { width: 17px; height: 8px; flex: none; }
.twist.shown::before { content: ""; display: block; width: 0; height: 0; border: 4px solid transparent; border-left-color: #555; border-right: 0; }
.rollback { height: 4px; margin-right: 2px; background: #3a8fc7; }
.handle {
  position: absolute;
  left: 100%;
  top: 375px;
  width: 12px;
  height: 49px;
  padding: 0 2px 2px 0;
  border: 1px solid #808080;
  border-left: 0;
  background: #f7f7f7;
}
.handle i { width: 4px; height: 4px; border: 1px solid #777; border-radius: 50%; background: #ccc; }
</style>
